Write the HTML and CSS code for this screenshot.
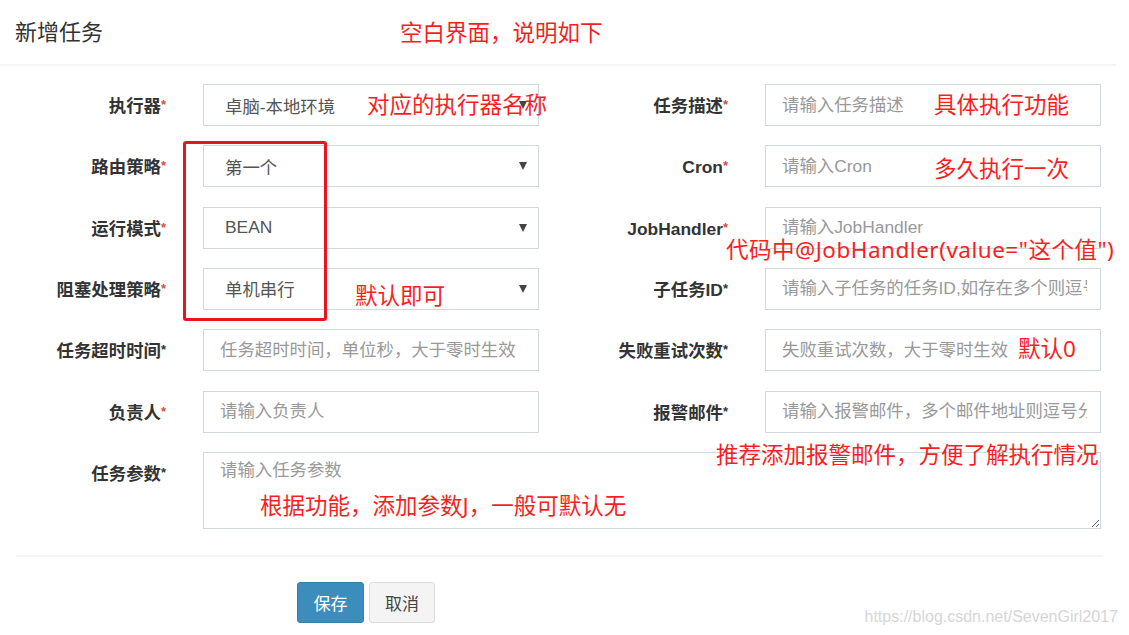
FILE: index.html
```html
<!DOCTYPE html>
<html lang="zh-CN">
<head>
<meta charset="utf-8">
<title>新增任务</title>
<link rel="stylesheet" href="styles.css">
</head>
<body>
<div class="page">
  <div class="modal">
    <div class="modal-header"><h4 class="title">新增任务</h4></div>
    <form class="form">
      <div class="grid">
        <label class="lbl">执行器<i class="req red">*</i></label>
        <div class="select"><span class="val">卓脑-本地环境</span><b class="caret"></b></div>
        <label class="lbl">任务描述<i class="req red">*</i></label>
        <input class="ctl" type="text" placeholder="请输入任务描述">

        <label class="lbl">路由策略<i class="req red">*</i></label>
        <div class="select"><span class="val">第一个</span><b class="caret"></b></div>
        <label class="lbl">Cron<i class="req red">*</i></label>
        <input class="ctl" type="text" placeholder="请输入Cron">

        <label class="lbl">运行模式<i class="req red">*</i></label>
        <div class="select"><span class="val">BEAN</span><b class="caret"></b></div>
        <label class="lbl">JobHandler<i class="req red">*</i></label>
        <input class="ctl" type="text" placeholder="请输入JobHandler">

        <label class="lbl">阻塞处理策略<i class="req red">*</i></label>
        <div class="select"><span class="val">单机串行</span><b class="caret"></b></div>
        <label class="lbl">子任务ID<i class="req">*</i></label>
        <input class="ctl" type="text" placeholder="请输入子任务的任务ID,如存在多个则逗号分隔">

        <label class="lbl">任务超时时间<i class="req">*</i></label>
        <input class="ctl" type="text" placeholder="任务超时时间，单位秒，大于零时生效">
        <label class="lbl">失败重试次数<i class="req">*</i></label>
        <input class="ctl" type="text" placeholder="失败重试次数，大于零时生效">

        <label class="lbl">负责人<i class="req red">*</i></label>
        <input class="ctl" type="text" placeholder="请输入负责人">
        <label class="lbl">报警邮件<i class="req">*</i></label>
        <input class="ctl" type="text" placeholder="请输入报警邮件，多个邮件地址则逗号分隔">

        <label class="lbl lbl-area">任务参数<i class="req">*</i></label>
        <textarea class="ctl area" placeholder="请输入任务参数"></textarea>
      </div>
      <div class="divider"></div>
      <div class="actions">
        <button type="button" class="btn btn-primary">保存</button>
        <button type="button" class="btn btn-default">取消</button>
      </div>
    </form>
  </div>

  <div class="redbox"></div>
  <span class="note n-title">空白界面，说明如下</span>
  <span class="note n-exec">对应的执行器名称</span>
  <span class="note n-block">默认即可</span>
  <span class="note n-desc">具体执行功能</span>
  <span class="note n-cron">多久执行一次</span>
  <span class="note n-handler">代码中@JobHandler(value="这个值")</span>
  <span class="note n-retry">默认0</span>
  <span class="note n-mail">推荐添加报警邮件，方便了解执行情况</span>
  <span class="note n-param">根据功能，添加参数J，一般可默认无</span>
  <span class="watermark">https://blog.csdn.net/SevenGirl2017</span>
</div>
</body>
</html>
```

FILE: styles.css
```css
* { box-sizing: border-box; }

html, body {
  margin: 0;
  padding: 0;
  background: #fff;
}

body {
  font-family: "Liberation Sans", "Noto Sans CJK SC", sans-serif;
  color: #333;
}

.page {
  position: relative;
  width: 1129px;
  height: 635px;
  overflow: hidden;
}

.modal {
  width: 1116px;
}

.modal-header {
  height: 66px;
  border-bottom: 2px solid #f4f4f4;
  display: flex;
  align-items: center;
  padding: 0 0 4px 15px;
}

.title {
  margin: 0;
  font-family: "Noto Sans CJK SC", sans-serif;
  font-weight: normal;
  font-size: 22px;
  color: #333;
}

.form {
  padding-top: 18px;
}

.grid {
  display: grid;
  grid-template-columns: 203px 336px 226px 336px;
  grid-template-rows: repeat(6, 42px) 77px;
  row-gap: 19.33px;
}

.lbl {
  text-align: right;
  padding-right: 37px;
  line-height: 42px;
  font-size: 17.4px;
  font-weight: bold;
  color: #333;
  white-space: nowrap;
}

.req {
  font-style: normal;
  font-size: 13px;
  color: #333;
  vertical-align: 3px;
}

.req.red { color: #dd4b39; }

.ctl {
  width: 100%;
  height: 42px;
  margin: 0;
  border: 1px solid #d2d6de;
  border-radius: 0;
  padding: 0 13px 0 16px;
  font-family: "Liberation Sans", "Noto Sans CJK SC", sans-serif;
  font-size: 17.4px;
  color: #555;
  background: #fff;
  outline: none;
}

.ctl::placeholder { color: #999; opacity: 1; }

.select {
  display: flex;
  align-items: center;
  height: 42px;
  border: 1px solid #d2d6de;
  padding-left: 21px;
  font-size: 17.4px;
  color: #555;
}

.val { flex: 1; }

.caret {
  width: 0;
  height: 0;
  margin-right: 11px;
  border-left: 4px solid transparent;
  border-right: 4px solid transparent;
  border-top: 8px solid #444;
}

.lbl-area {
  align-self: start;
  grid-row: 7;
}

.area {
  grid-row: 7;
  grid-column: 2 / 5;
  height: 77px;
  padding: 5px 13px 5px 16px;
  line-height: 24px;
  resize: both;
}

.divider {
  margin: 26px 0 0 16px;
  width: 1087px;
  height: 2px;
  background: #f4f4f4;
}

.actions {
  display: flex;
  gap: 5px;
  padding: 25px 0 0 297px;
}

.btn {
  height: 41px;
  padding: 0 15px;
  border-radius: 3px;
  font-family: "Noto Sans CJK SC", sans-serif;
  font-size: 17px;
  cursor: pointer;
}

.btn-primary {
  width: 67px;
  background: #3c8dbc;
  border: 1px solid #367fa9;
  color: #fff;
}

.btn-default {
  width: 66px;
  background: #f4f4f4;
  border: 1px solid #ddd;
  color: #444;
}

/* annotation overlay */
.redbox {
  position: absolute;
  left: 183px;
  top: 141px;
  width: 144px;
  height: 180px;
  border: 3px solid #e8141e;
  border-radius: 3px;
}

.note {
  position: absolute;
  font-family: "Noto Sans", "Noto Sans CJK SC", sans-serif;
  font-size: 22.5px;
  line-height: 30px;
  color: #fa1e23;
  white-space: nowrap;
}

.n-title   { left: 400px; top: 18px; }
.n-exec    { left: 367px; top: 90px; }
.n-block   { left: 355px; top: 281px; }
.n-desc    { left: 934px; top: 90px; }
.n-cron    { left: 934px; top: 154px; }
.n-handler { left: 726px; top: 235px; letter-spacing: 0.5px; }
.n-retry   { left: 1018px; top: 334px; }
.n-mail    { left: 716px; top: 440px; }
.n-param   { left: 260px; top: 491px; }

.watermark {
  position: absolute;
  right: 11px;
  top: 607px;
  font-family: "Liberation Sans", sans-serif;
  font-size: 16px;
  line-height: 20px;
  color: #d6d6d6;
  white-space: nowrap;
}
```
